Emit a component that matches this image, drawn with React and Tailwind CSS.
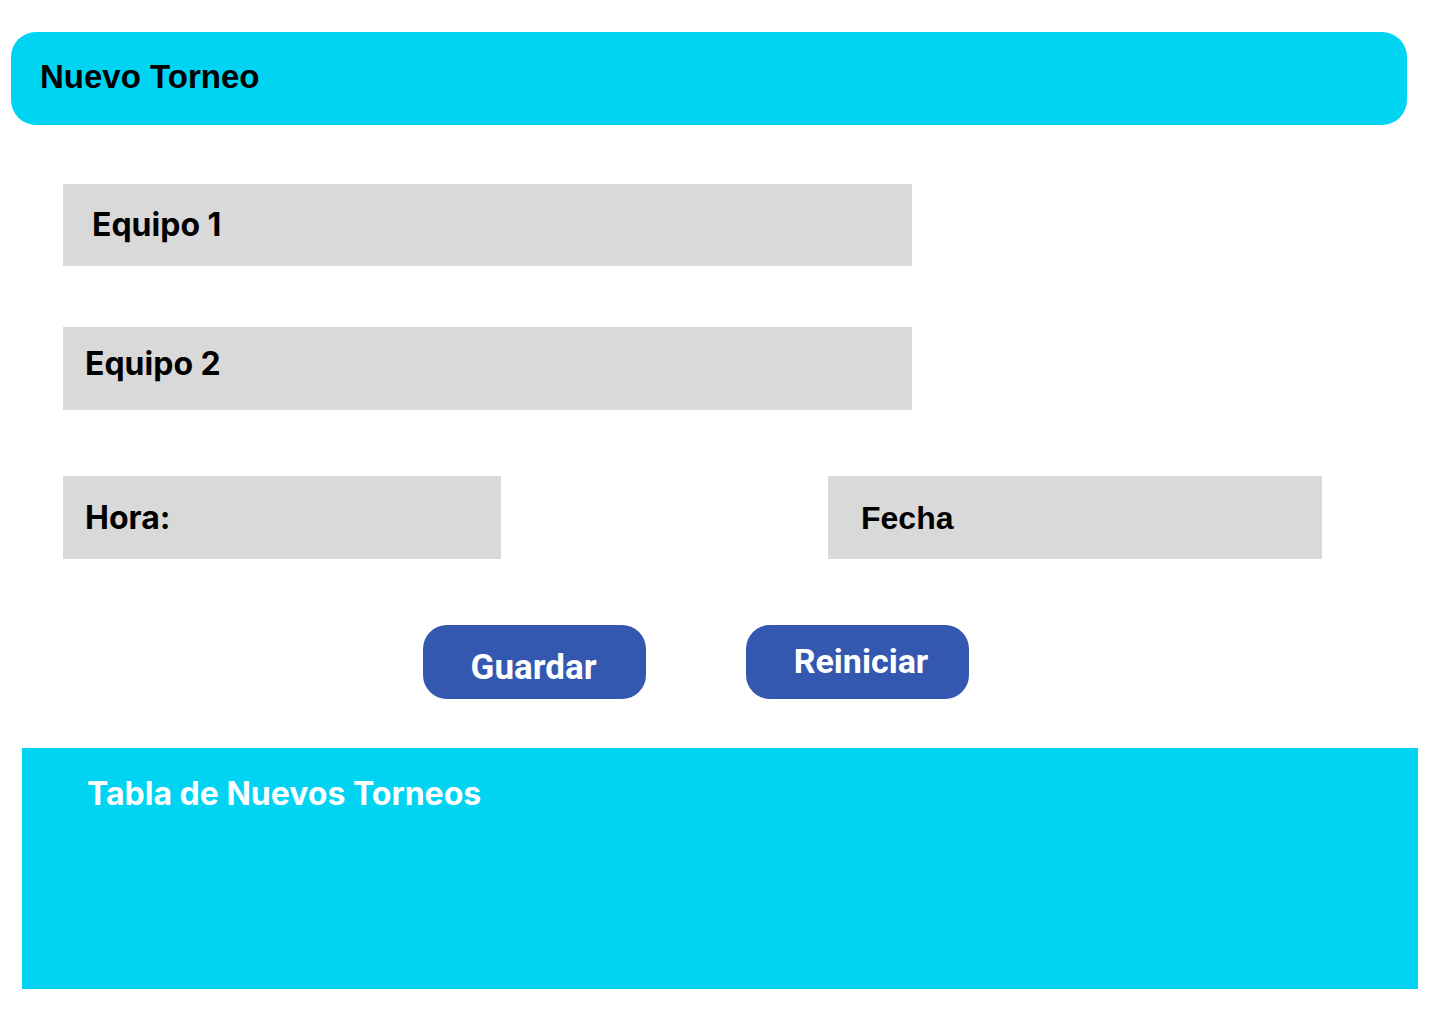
export default function App() {
  const inter = { fontFamily: "Inter, 'Noto Sans', sans-serif" };
  return (
    <div className="w-[1440px] h-[1024px] bg-white overflow-hidden relative">
      <div className="flex flex-col">
        <div className="mt-[32px] ml-[11px] w-[1396px] h-[93px] rounded-[25px] bg-[#00d4f2] flex items-center pl-[29px] pb-[5px]">
          <span className="font-['Liberation_Sans',Arial,sans-serif] font-bold text-[33px] leading-none text-black">Nuevo Torneo</span>
        </div>

        <div className="ml-[63px] mt-[59px] w-[849px] h-[82px] bg-[#d9d9d9] flex items-center pl-[29px] pb-[1px]">
          <span style={inter} className="font-bold text-[32px] leading-none text-black">Equipo 1</span>
        </div>

        <div className="ml-[63px] mt-[61px] w-[849px] h-[83px] bg-[#d9d9d9] flex items-center pl-[22px] pb-[9px]">
          <span style={inter} className="font-bold text-[32px] leading-none text-black">Equipo 2</span>
        </div>

        <div className="ml-[63px] mt-[66px] flex h-[83px]">
          <div className="w-[438px] h-full bg-[#d9d9d9] flex items-center pl-[22px]">
            <span style={inter} className="font-bold text-[32px] leading-none text-black">Hora:</span>
          </div>
          <div className="ml-[327px] w-[494px] h-full bg-[#d9d9d9] flex items-center pl-[33px] pt-[1px]">
            <span className="font-['Liberation_Sans',Arial,sans-serif] font-bold text-[32px] leading-none text-black">Fecha</span>
          </div>
        </div>

        <div className="ml-[423px] mt-[66px] flex gap-[100px]">
          <div className="w-[223px] h-[74px] rounded-[24px] bg-[#3457b0] flex items-center justify-center pt-[10px] pr-[2px]">
            <span className="font-['Roboto',sans-serif] font-bold text-[35px] leading-none text-white">Guardar</span>
          </div>
          <div className="w-[223px] h-[74px] rounded-[24px] bg-[#3457b0] flex items-center justify-center pb-[2px] pl-[7px]">
            <span className="font-['Roboto',sans-serif] font-bold text-[34px] leading-none text-white">Reiniciar</span>
          </div>
        </div>

        <div className="ml-[22px] mt-[49px] w-[1396px] h-[241px] bg-[#00d4f2] pl-[65px] pt-[30px]">
          <span style={inter} className="font-bold text-[32px] leading-none text-white">Tabla de Nuevos Torneos</span>
        </div>
      </div>
    </div>
  );
}
